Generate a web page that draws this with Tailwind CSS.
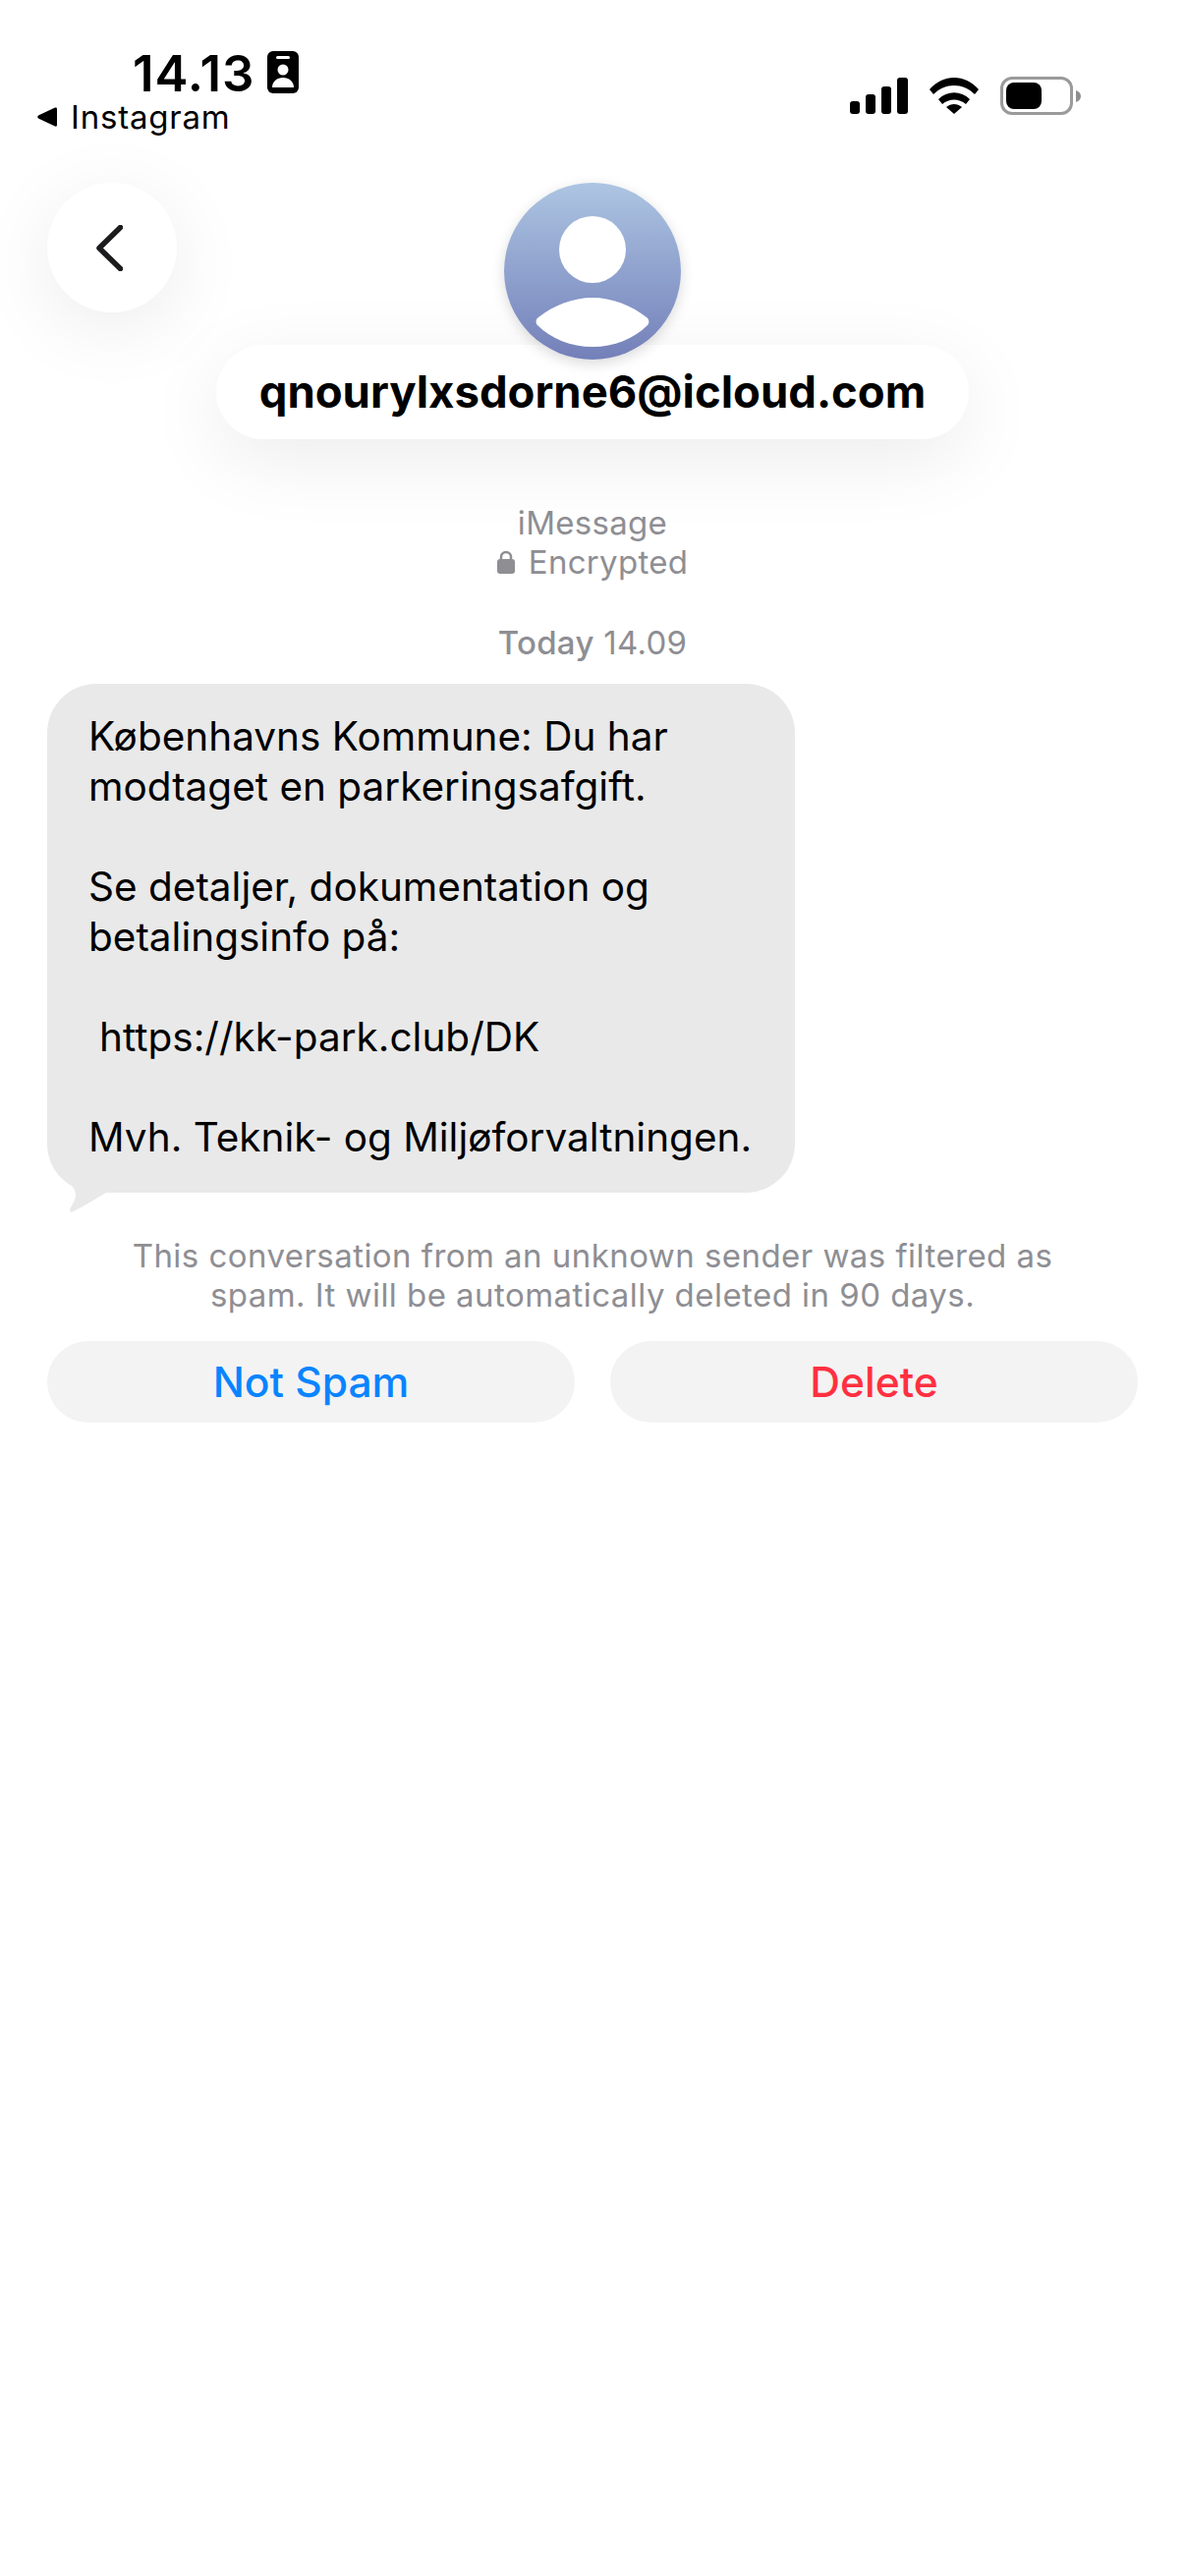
<!DOCTYPE html>
<html lang="en">
  <head>
    <meta charset="UTF-8" />
    <meta name="viewport" content="width=device-width, initial-scale=1.0" />
    <title>Messages</title>
    <script src="https://cdn.jsdelivr.net/npm/@tailwindcss/browser@4"></script>
  </head>
  <body class="min-h-screen bg-white font-['Inter',sans-serif] text-black">
    <!-- status bar -->
    <div class="flex h-[186px] justify-between pl-[38px] pr-[106px]">
      <div class="pt-[46px]">
        <div class="flex h-[54px] items-center gap-[12px] pl-[97px]">
          <span class="pt-[4px] text-[51px] leading-[54px] font-semibold tracking-[1px]">14.13</span>
          <svg width="32" height="43" viewBox="0 0 32 43">
            <rect width="32" height="43" rx="6" fill="#000" />
            <rect x="9" y="5" width="14" height="3" rx="1.5" fill="#fff" />
            <circle cx="16" cy="19" r="5.5" fill="#fff" />
            <path d="M5 37c0-6 5-10 11-10s11 4 11 10z" fill="#fff" />
          </svg>
        </div>
        <div class="flex h-[38px] items-center gap-[12px]">
          <svg width="22" height="20" viewBox="0 0 22 20"><path d="M20 1.500v17q0 1.500-2 1L1 11.500q-1.500-1.500 0-3L18 .5q2-.5 2 1z" fill="#000" /></svg>
          <span class="text-[33px] leading-[38px] font-normal tracking-[0.8px]">Instagram</span>
        </div>
      </div>
      <div class="flex h-[117px] items-end gap-[22px] pb-0">
        <svg width="59" height="37" viewBox="0 0 59 37" class="mb-px">
          <rect x="0" y="24" width="10" height="13" rx="3" fill="#000" />
          <rect x="16" y="17" width="10" height="20" rx="3" fill="#000" />
          <rect x="32" y="9" width="10" height="28" rx="3" fill="#000" />
          <rect x="48" y="0" width="11" height="37" rx="3" fill="#000" />
        </svg>
        <svg width="50" height="37" viewBox="0 0 50 37" class="mb-px">
          <path d="M0 12C14-4 36-4 50 12l-4 5C34 5 16 5 4 17z" fill="#000" />
          <path d="M9 22c9-9 23-9 32 0l-4 5c-7-6-17-6-24 0z" fill="#000" />
          <path d="M17 30c5-4 11-4 16 0l-8 7z" fill="#000" />
        </svg>
        <div class="flex items-center gap-[3px]">
          <div class="flex h-[39px] w-[74px] items-center rounded-[12px] border-[3px] border-[#9a9a9a] pl-[3px]">
            <div class="h-[27px] w-[36px] rounded-[8px] bg-black"></div>
          </div>
          <svg width="5" height="12" viewBox="0 0 5 12"><path d="M0 0c3 1 5 3 5 6s-2 5-5 6z" fill="#8e8e8e" /></svg>
        </div>
      </div>
    </div>

    <!-- conversation header -->
    <div class="relative flex flex-col items-center">
      <button class="absolute top-0 left-[48px] flex h-[132px] w-[132px] items-center justify-center rounded-full bg-white shadow-[0_16px_80px_rgba(0,0,0,0.08)]">
        <svg width="27" height="47" viewBox="0 0 27 47" class="mr-[6px]">
          <path d="M24.500 2.500L3 23.500l21.500 21" fill="none" stroke="#1c1c1e" stroke-width="5.500" stroke-linecap="round" stroke-linejoin="round" />
        </svg>
      </button>
      <div class="relative z-10 h-[180px] w-[180px] rounded-full bg-gradient-to-b from-[#adc5e2] to-[#7480b9] shadow-[0_4px_14px_rgba(0,0,0,0.15)]">
        <svg width="180" height="180" viewBox="0 0 180 180">
          <circle cx="90" cy="68" r="34" fill="#fff" />
          <path d="M35 137C50 125 70 117 90 117s40 8 55 20c3 2 3 6 1 8-14 14-34 22-56 22s-42-8-56-22c-2-2-2-6 1-8z" fill="#fff" />
        </svg>
      </div>
      <div class="-mt-[15px] flex h-[96px] w-[766px] items-center justify-center rounded-full bg-white shadow-[0_20px_80px_rgba(0,0,0,0.08)]">
        <span class="text-[45.500px] leading-[56px] font-bold">qnourylxsdorne6@icloud.com</span>
      </div>
    </div>

    <!-- service label -->
    <div class="mt-[65px] text-center text-[33px] leading-[40px] tracking-[0.3px] text-[#8e8e93]">
      <p>iMessage</p>
      <p class="flex items-center justify-center gap-[14px]">
        <svg width="18" height="24" viewBox="0 0 18 24">
          <path d="M4 10V7a5 5 0 0 1 10 0v3" fill="none" stroke="#8e8e93" stroke-width="2.500" />
          <rect x="0" y="9" width="18" height="15" rx="3" fill="#8e8e93" />
        </svg>
        <span>Encrypted</span>
      </p>
    </div>
    <p class="mt-[42px] text-center text-[33px] leading-[40px] tracking-[0.3px] text-[#8e8e93]"><span class="font-medium">Today</span> 14.09</p>

    <!-- received message -->
    <div class="relative mt-[22px] ml-[48px] w-[761px] rounded-[50px] bg-[#e9e9e9] pt-[28px] pr-[30px] pb-[31px] pl-[42px] text-[40.500px] leading-[51px]">
      <svg class="absolute top-[494px] left-0" width="60" height="46" viewBox="0 0 60 46">
        <path d="M12 4C22 12 30 20 29 28C28 33 25 37 23.500 40C22.500 43 24 45 27 43C38 37 48 31 60 24V0H12z" fill="#e9e9e9" />
      </svg>
      <div class="relative whitespace-nowrap">
        <p>Københavns Kommune: Du har</p>
        <p>modtaget en parkeringsafgift.</p>
        <p>&nbsp;</p>
        <p>Se detaljer, dokumentation og</p>
        <p>betalingsinfo på:</p>
        <p>&nbsp;</p>
        <p class="pl-[11px]">https://kk-park.club/DK</p>
        <p>&nbsp;</p>
        <p>Mvh. Teknik- og Miljøforvaltningen.</p>
      </div>
    </div>

    <!-- spam notice and actions -->
    <p class="mt-[44px] text-center text-[33px] leading-[40px] tracking-[0.45px] text-[#8e8e93]">This conversation from an unknown sender was filtered as<br />spam. It will be automatically deleted in 90 days.</p>
    <div class="mt-[27px] grid grid-cols-2 gap-[36px] px-[48px]">
      <button class="h-[83px] rounded-full bg-[#f3f3f3] text-[42.500px] font-medium text-[#0a84ff]">Not Spam</button>
      <button class="h-[83px] rounded-full bg-[#f3f3f3] text-[42.500px] font-medium text-[#ff3040]">Delete</button>
    </div>
  </body>
</html>
